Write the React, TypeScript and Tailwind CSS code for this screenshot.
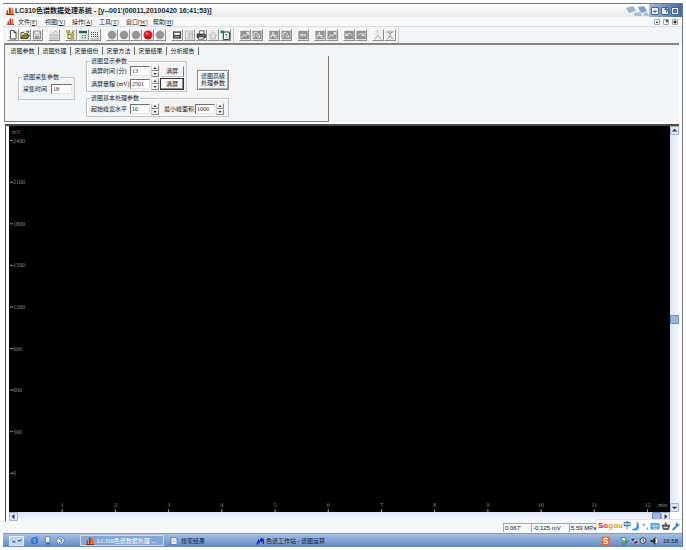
import { useState, type ReactNode } from "react";

const SANS = "font-['Liberation_Sans','Noto_Sans_CJK_SC',sans-serif]";
const SONG = "font-['Liberation_Serif','Noto_Sans_CJK_SC',serif]";

function Flame({ className = "size-2" }: { className?: string }) {
  return (
    <svg viewBox="0 0 8 8" className={className} aria-hidden="true">
      <path d="M0 7.5h8" stroke="#7a2b12" strokeWidth="1" />
      <path d="M0.4 7.2 0.8 3.6 1.8 2.8 2.6 7.2Z" fill="#c8401a" />
      <path d="M2.8 7.2 3 1.2 4 0 4.8 1.6 4.9 7.2Z" fill="#b83214" />
      <path d="M5.1 7.2 5.6 1.4 6.6 0.8 7.6 7.2Z" fill="#d8641c" />
      <path d="M2.2 7 2.7 4.6 3.2 7ZM4.5 7 5 4.4 5.6 7Z" fill="#f6b94c" />
    </svg>
  );
}

const icons: Record<string, ReactNode> = {
  new: <path d="M2.5 0.5h3.5l2 2v6.5h-5.5zM6 0.5v2h2" fill="#fff" stroke="#222" strokeWidth="0.8" />,
  open: (
    <>
      <path d="M1 8.5v-6h2.5l1 1h3v1.5" fill="#f7ef8a" stroke="#3c3a10" strokeWidth="0.8" />
      <path d="M1 8.5 3 5h6.4L7.6 8.5z" fill="#8d8a1a" stroke="#222" strokeWidth="0.8" />
      <path d="M6 1.6q1.5-1.2 2.6 0.4M8.9 0.8v1.5h-1.4" fill="none" stroke="#222" strokeWidth="0.7" />
    </>
  ),
  save: (
    <>
      <path d="M1.5 1.2h7v7.6h-7z" fill="#d8d8d8" stroke="#8b8b8b" />
      <path d="M3 1.4h4v2.8h-4z" fill="#fff" stroke="#9c9c9c" strokeWidth="0.6" />
      <path d="M3 6h4v2.8h-4z" fill="#999" />
    </>
  ),
  load: (
    <>
      <path d="M1 4.4h8v4.6h-8z" fill="#dcdcdc" stroke="#b0b0b0" strokeWidth="0.8" />
      <path d="M3 4.6v4M5 4.6v4M7 4.6v4" stroke="#b8b8b8" strokeWidth="0.7" />
      <path d="M3.6 3 7 1.2l1.4 2" fill="none" stroke="#b4b4b4" />
    </>
  ),
  tree: (
    <>
      <path d="M2 1v7.6h3M2 4.6h3" fill="none" stroke="#55551a" strokeWidth="0.8" />
      <path d="M0.8 0.6h2.8v2.4h-2.8zM4.8 3.2h3v2.4h-3zM4.8 6.8h3v2.4h-3z" fill="#e2d42a" stroke="#6b6a12" strokeWidth="0.6" />
      <path d="M6 1h2.6M6 2.4h1.6" stroke="#2b7d35" strokeWidth="0.8" />
    </>
  ),
  panel: (
    <>
      <path d="M1 0.8h8v2.4h-8z" fill="#1f6544" />
      <path d="M3 4h6v5h-6z" fill="#f6fff8" stroke="#9aa" strokeWidth="0.5" />
      <path d="M4 5.6h1.4M6.4 5.6h1.6M4 7.6h1.4M6.4 7.6h1.6" stroke="#444" strokeWidth="0.9" />
    </>
  ),
  grid: (
    <>
      <path d="M1 2.5h8M1 4.5h8M1 6.5h8" stroke="#444" strokeDasharray="1 1" strokeWidth="1" />
      <path d="M0.6 9h9" stroke="#777" strokeWidth="0.7" />
    </>
  ),
  dot: <circle cx="5" cy="5" r="4.2" fill="#959595" />,
  red: (
    <>
      <circle cx="5" cy="5" r="4.5" fill="#d81b24" />
      <circle cx="4" cy="3.6" r="1.4" fill="#f26a6a" />
      <path d="M3 7.4h4" stroke="#8c0d14" />
    </>
  ),
  card: (
    <>
      <path d="M1 1.4h8v7.2h-8z" fill="#444" />
      <path d="M2.2 2.8h5.6v2h-5.6z" fill="#fff" />
      <path d="M2.4 6.8h5" stroke="#ddd" strokeWidth="0.8" />
    </>
  ),
  page: (
    <>
      <path d="M1.5 1h7v8h-7z" fill="#eee" stroke="#aaa" strokeWidth="0.8" />
      <path d="M3.5 3.2h5M3.5 5h4M3.5 7h4" stroke="#999" strokeWidth="0.8" />
    </>
  ),
  print: (
    <>
      <path d="M3 4 3.8 0.8h4.4L7.6 4" fill="#fff" stroke="#333" strokeWidth="0.8" />
      <path d="M1 4h8.4v3.6h-8.4z" fill="#555" stroke="#222" strokeWidth="0.7" />
      <path d="M2.4 6.8h5.4v2.4h-5.4z" fill="#eee" stroke="#333" strokeWidth="0.7" />
      <path d="M7 5.2h1.2" stroke="#e8d43a" strokeWidth="0.8" />
    </>
  ),
  house: <path d="M1 5.4 5 1.4 9 5.4H7.6V9H2.4V5.4z" fill="#dcdcdc" stroke="#b2b2b2" strokeWidth="0.8" />,
  help: (
    <>
      <path d="M3.4 2h6v7.4h-6z" fill="#fff" stroke="#222" strokeWidth="0.9" />
      <path d="M0.6 0.6h3.6v2.6h-3.6z" fill="#1d7b6e" />
      <path d="M5 4.4h1.6v1.4M6.4 7.4h1" fill="none" stroke="#1d7b6e" />
    </>
  ),
  peakA: (
    <>
      <path d="M0.4 0.8h9.2v8.4h-9.2z" fill="#929292" />
      <path d="M1.4 8 4 4.6 5.4 6.4 8.4 2.4M6 2.4h2.4V5" fill="none" stroke="#f2f2f2" strokeWidth="0.9" />
    </>
  ),
  peakB: (
    <>
      <path d="M0.4 0.8h9.2v8.4h-9.2z" fill="#929292" />
      <path d="M2 8V3l2.4-1 3 3.4V8M4 4.6 6.6 8" fill="none" stroke="#f2f2f2" strokeWidth="0.9" />
    </>
  ),
  peakC: (
    <>
      <path d="M0.4 0.8h9.2v8.4h-9.2z" fill="#929292" />
      <path d="M1.6 8 4.2 2.2 6 7.4 8.4 8M2.8 5.4h5" fill="none" stroke="#f2f2f2" strokeWidth="0.9" />
    </>
  ),
  bar: (
    <>
      <path d="M0.4 0.8h9.2v8.4h-9.2z" fill="#929292" />
      <path d="M2 4.4h6M2 5.8h6" stroke="#f2f2f2" strokeWidth="0.8" />
    </>
  ),
  undo: (
    <>
      <path d="M0.4 0.8h9.2v8.4h-9.2z" fill="#929292" />
      <path d="M2 3v2.6h2.6M2.2 5.4Q5 1.6 8 5.4" fill="none" stroke="#f2f2f2" strokeWidth="0.9" />
    </>
  ),
  redo: (
    <>
      <path d="M0.4 0.8h9.2v8.4h-9.2z" fill="#929292" />
      <path d="M8 3v2.6H5.4M7.8 5.4Q5 1.6 2 5.4" fill="none" stroke="#f2f2f2" strokeWidth="0.9" />
    </>
  ),
  walk: <path d="M4.8 0.6v2M4.8 4.4v1.4L1.6 9.2M4.8 5.8 8.4 9.2" fill="none" stroke="#a9a9a9" />,
  run: (
    <path d="M1 2h2.4l1 1.4 4-1.8M5 3v3L2 9.4M5 6l3.4 3.2M4.4 1.2h2" fill="none" stroke="#8f8f8f" />
  ),
};

const groupsLeft = [
  ["new", "open", "save"],
  ["load"],
  ["tree", "panel", "grid"],
  ["dot", "dot", "dot", "red", "dot"],
  ["card", "page", "print", "house", "help"],
];
const groupsRight = [["peakA", "peakB"], ["peakC", "peakB"], ["bar"], ["peakC", "peakA"], ["undo", "redo"], ["walk", "run"]];

function ToolGroup({ names }: { names: string[] }) {
  return (
    <div className="flex">
      {names.map((name, i) => (
        <button
          key={i}
          aria-label={name}
          className="flex h-3 w-3 items-center justify-center border border-t-white border-l-white border-r-[#8e8e8e] border-b-[#8e8e8e] bg-[#eeefef]"
        >
          <svg viewBox="0 0 10 10" className="size-[10px] shrink-0" aria-hidden="true">
            {icons[name]}
          </svg>
        </button>
      ))}
    </div>
  );
}

function Field({ id, label, initial, width }: { id: string; label: string; initial: string; width: string }) {
  const [value, setValue] = useState(initial);
  return (
    <>
      <label htmlFor={id} className="shrink-0 whitespace-nowrap">
        {label}
      </label>
      <input
        id={id}
        value={value}
        onChange={(e) => setValue(e.target.value)}
        className={`${width} h-[10px] min-w-0 border border-t-[#6f6f6f] border-l-[#6f6f6f] border-r-[#e4e4e4] border-b-[#e4e4e4] bg-white pl-px leading-none`}
      />
    </>
  );
}

function Spinner() {
  return (
    <span className="flex flex-col">
      {["▴", "▾"].map((c) => (
        <button
          key={c}
          aria-label={c === "▴" ? "增加" : "减少"}
          className="flex h-[6px] w-2 items-center justify-center border border-t-white border-l-[#d0d0d0] border-r-[#888] border-b-[#888] bg-[#f0f0f0]"
        >
          <svg viewBox="0 0 4 2" className="h-[2px] w-1" aria-hidden="true">
            <path d={c === "▴" ? "M0.5 2 2 0 3.5 2z" : "M0.5 0h3L2 2z"} fill="#333" />
          </svg>
        </button>
      ))}
    </span>
  );
}

const groupBox = "border border-[#c4c5c7] shadow-[inset_1px_1px_0_#fff]";
const legend = "ml-[3px] px-px leading-[8px]";

function Parameters() {
  return (
    <div className="flex items-start pt-px pl-[13px]">
      <fieldset className={`${groupBox} mt-[16px] w-[57px] pb-[5px]`}>
        <legend className={legend}>谱图采集参数</legend>
        <div className="mt-[3px] flex items-center justify-between pr-[2px] pl-1">
          <Field id="collect" label="采集时间" initial="18" width="w-[21px]" />
        </div>
      </fieldset>
      <div className="ml-[11px] flex w-[143px] flex-col gap-[2px]">
        <div className="flex items-center justify-between">
          <fieldset className={`${groupBox} w-[101px] pb-px`}>
            <legend className={legend}>谱图显示参数</legend>
            <div className="flex flex-col gap-px pl-1">
              <div className="grid grid-cols-[38px_20px_8px_24px] items-center gap-px">
                <Field id="time" label="满屏时间 (分)" initial="13" width="w-[20px]" />
                <Spinner />
                <button className="h-[11px] border border-t-white border-l-white border-r-[#777] border-b-[#bbb] leading-none">满屏</button>
              </div>
              <div className="grid grid-cols-[38px_20px_8px_24px] items-center gap-px">
                <Field id="range" label="满屏量程 (mV)" initial="2501" width="w-[20px]" />
                <Spinner />
                <button className="h-3 border border-[#333] leading-none shadow-[inset_-1px_-1px_0_#888]">满屏</button>
              </div>
            </div>
          </fieldset>
          <button className="mt-[11px] h-5 w-8 border border-[#888] leading-[7px] shadow-[inset_1px_1px_0_#fff,inset_-1px_-1px_0_#aaa]">
            谱图高级
            <br />
            处理参数
          </button>
        </div>
        <fieldset className={`${groupBox} pb-px`}>
          <legend className={legend}>谱图基本处理参数</legend>
          <div className="mt-px flex items-center pr-1 pl-1">
            <div className="grid grid-cols-[38px_20px_8px] items-center gap-px">
              <Field id="width" label="起始峰宽水平" initial="10" width="w-[20px]" />
              <Spinner />
            </div>
            <div className="ml-auto flex items-center gap-px">
              <Field id="area" label="最小峰面积" initial="1000" width="w-[20px]" />
              <Spinner />
            </div>
          </div>
        </fieldset>
      </div>
    </div>
  );
}

const yLabels = ["2400", "2100", "1800", "1500", "1200", "900", "600", "300", "0"];

function Chart() {
  return (
    <svg className={`h-full w-full min-w-0 flex-1 bg-black ${SONG} text-[6px]`} role="img" aria-label="mV / min">
      <text x="3" y="8" fill="#777">
        mV
      </text>
      {yLabels.map((label, i) => {
        const y = `${3.8 + i * 10.77}%`;
        return (
          <g key={label}>
            <line x1="1" x2="4" y1={y} y2={y} stroke="#999" />
            <text x="4" y={y} dy="2" fill="#8a8a8a">
              {label}
            </text>
          </g>
        );
      })}
      {Array.from({ length: 12 }, (_, i) => {
        const x = `${8.05 + i * 8.05}%`;
        return (
          <g key={i}>
            <line x1={x} x2={x} y1="99.3%" y2="100%" stroke="#aaa" />
            <text x={x} y="98.7%" textAnchor="middle" fill="#8a8a8a">
              {i + 1}
            </text>
          </g>
        );
      })}
      <text x="99.6%" y="98.7%" textAnchor="end" fill="#888">
        min
      </text>
    </svg>
  );
}

const arrowPaths = {
  up: "M1 5 4 2 7 5z",
  down: "M1 3h6L4 6z",
  left: "M5 1v6L2 4z",
  right: "M3 1v6l3-3z",
};

function ScrollArrow({ dir }: { dir: keyof typeof arrowPaths }) {
  return (
    <button aria-label={dir} className="size-[9px] shrink-0 rounded-[1px] border border-[#9fb2d0] bg-[#dfe8f6]">
      <svg viewBox="0 0 8 8" className="size-[7px]" aria-hidden="true">
        <path d={arrowPaths[dir]} fill="#1c2c48" />
      </svg>
    </button>
  );
}

const menus = [
  ["文件", "F"],
  ["视图", "V"],
  ["操作", "A"],
  ["工具", "T"],
  ["窗口", "W"],
  ["帮助", "H"],
];
const tabs = ["谱图参数", "谱图处理", "定量组份", "定量方法", "定量结果", "分析报告"];
const windowGlyphs = ["M2 4h4L4 6z", "M4 1h3v3zM3 2h2M6 4v2", "M2 2h4v4h-4zM2 6 6 2"];

function TitleBar() {
  return (
    <header className="flex h-[14px] items-center border-t border-[#777] bg-linear-to-b from-white to-[#e9eaea] pl-[3px]">
      <Flame />
      <h1 className={`ml-px flex-1 text-[7px] leading-[10px] font-bold whitespace-nowrap text-[#222] ${SANS}`}>
        LC310色谱数据处理系统 - [y--001'(00011,20100420 16;41;53)]
      </h1>
      <svg viewBox="0 0 24 13" className="h-[13px] w-6 shrink-0" aria-hidden="true">
        <path d="m1 4 7-2 3 5-7 2z" fill="#98b3d8" />
        <path d="m13 3 6-1 3 5-6 2z" fill="#7f9fcb" />
        <path d="m9 9 6-1 2 4h-7zM18 9l4-1 2 4h-5z" fill="#a9c0e0" />
      </svg>
      <div className="flex h-full items-center gap-[2px] bg-linear-to-r from-[#a4bbdc] to-[#4569a2] pr-[3px] pl-[2px]">
        {windowGlyphs.map((d) => (
          <button key={d} aria-label="窗口" className="size-2 rounded-[1px] border border-[#41659c] bg-[#e9f0fa]">
            <svg viewBox="0 0 8 8" className="size-[6px]" aria-hidden="true">
              <path d={d} fill="#8ba6cd" stroke="#24426f" strokeWidth="1" />
            </svg>
          </button>
        ))}
      </div>
    </header>
  );
}

function MenuBar() {
  return (
    <nav className="flex h-[10px] items-center border-b border-[#dcdedf] bg-[#f7f8f9] pr-1 pl-1">
      <Flame className="size-[7px]" />
      <div className="ml-1 flex flex-1 gap-[7px]">
        {menus.map(([name, key]) => (
          <button key={key} className="w-5 text-left whitespace-nowrap">
            {name}[<u>{key}</u>]
          </button>
        ))}
      </div>
      <div className="flex gap-[3px]">
        {windowGlyphs.map((d) => (
          <button key={d} aria-label="子窗口" className="size-[6px] rounded-[1px] border border-[#9aa3ae] bg-white">
            <svg viewBox="0 0 8 8" className="size-1" aria-hidden="true">
              <path d={d} fill="#333" stroke="#222" strokeWidth="1.4" />
            </svg>
          </button>
        ))}
      </div>
    </nav>
  );
}

function SogouBar() {
  return (
    <div className="absolute right-0 bottom-px flex h-[13px] w-[86px] items-center justify-between border-t border-l border-[#e3e3e3] bg-white px-px">
      <span className={`text-[8px] leading-none font-bold ${SANS}`}>
        <span className="text-[#d8241f]">S</span>
        <span className="text-[#e0402a]">o</span>
        <span className="text-[#f0a41c]">g</span>
        <span className="text-[#8fb62c]">o</span>
        <span className="text-[#d9a21e]">u</span>
      </span>
      <span className="text-[8px] leading-none font-bold text-[#2d7fc8]">中</span>
      <svg viewBox="0 0 50 10" className="h-[10px] w-[50px]" aria-hidden="true">
        <path d="M6 1q1.6 7-5 7.4Q8 11 7.6 4.6 7.4 2 6 1z" fill="#3f8fd6" stroke="#3f8fd6" strokeWidth="0.8" />
        <circle cx="13" cy="4" r="1" fill="none" stroke="#4a86bd" strokeWidth="0.7" />
        <path d="M16.4 6.4v1.6l-1 1" stroke="#4a86bd" fill="none" />
        <rect x="19.5" y="2" width="9" height="6.4" rx="0.6" fill="#4ba0dd" />
        <path d="M21 4h6.4M21 5.6h6.4M22 7.2h4" stroke="#e9f5ff" strokeWidth="0.7" />
        <path d="M35 1v3h3.6l-1 4.4h-5.2L31 4h2" fill="#6b6156" stroke="#3a332c" strokeWidth="0.7" />
        <path d="M32.6 6.4h4.4" stroke="#fff" strokeWidth="0.8" />
        <path d="M41.6 9 46 4.6" stroke="#2f82cc" strokeWidth="1.8" />
        <path d="M44.4 3.4 46 1l1 2 2 .8-2.4 2z" fill="#2f82cc" />
      </svg>
    </div>
  );
}

function TaskBar() {
  return (
    <footer className="flex h-[14px] items-center border-t border-[#8d98a8] bg-linear-to-b from-[#a5c0e4] to-[#6289bf] pl-[6px] text-[#10203c]">
      <button aria-label="开始" className="flex h-[10px] w-[15px] items-center justify-center border border-[#e6eefa] bg-[#bfd2ec]">
        <svg viewBox="0 0 12 8" className="h-2 w-3" aria-hidden="true">
          <path d="M1 4q2-2 4 0L4.6 7Q3 5.4 1 6.6zM6 2q2.4 1.4 5-1L11 4Q8.6 6 6 4.6z" fill="#5079b5" stroke="#fff" strokeWidth="0.6" />
        </svg>
      </button>
      <div className="ml-[6px] flex gap-1">
        <svg viewBox="0 0 9 9" className="size-[9px]" aria-hidden="true">
          <circle cx="4.5" cy="4.8" r="2.8" fill="none" stroke="#1f73cc" strokeWidth="1.5" />
          <path d="M2.6 4.8h4.6M0.8 6.6Q3 0.4 8.6 1" fill="none" stroke="#2a7fd8" />
        </svg>
        <svg viewBox="0 0 9 9" className="size-[9px]" aria-hidden="true">
          <path d="M2.4 0.6h4.4v5.6h-4.4z" fill="#f2f8ff" stroke="#4776b4" strokeWidth="0.7" />
          <path d="M3 7.8h4" stroke="#2d68b4" strokeWidth="1.4" />
        </svg>
        <svg viewBox="0 0 9 9" className="size-[9px]" aria-hidden="true">
          <circle cx="4.5" cy="4.6" r="3.8" fill="#dcecf8" stroke="#3c6ca4" strokeWidth="0.7" />
          <path d="M4.5 4.6 6.6 2.6M2.6 3q2-1.6 3 1.6T3 6.6" fill="none" stroke="#2c6cae" strokeWidth="0.9" />
        </svg>
      </div>
      <button className="ml-[15px] flex h-[11px] w-[84px] items-center gap-[3px] border border-[#c9daf0] bg-[#86a6d3] pl-[5px] whitespace-nowrap text-white">
        <Flame />
        LC310色谱数据处理 ...
      </button>
      <button className="ml-[6px] flex w-[84px] items-center gap-[3px] whitespace-nowrap">
        <svg viewBox="0 0 8 8" className="size-2" aria-hidden="true">
          <path d="M1 0.6h4.6L7 2v5.4H1z" fill="#fff" stroke="#426ca6" strokeWidth="0.8" />
          <path d="M2.4 3h3M2.4 4.6h3" stroke="#6c93c8" strokeWidth="0.7" />
        </svg>
        搜索结果
      </button>
      <button className="ml-[2px] flex items-center gap-[2px] whitespace-nowrap">
        <svg viewBox="0 0 8 8" className="size-2" aria-hidden="true">
          <path d="M0.6 7.4 2.4 3.4 3 6 5.4 1 5.6 5 7.2 1.4 7.4 7" fill="none" stroke="#1426c4" strokeWidth="1.1" />
        </svg>
        色谱工作站 - 谱图运算
      </button>
      <svg viewBox="0 0 60 10" className="mr-[2px] ml-auto h-[10px] w-[60px]" aria-hidden="true">
        <rect x="0.5" y="0.8" width="8.4" height="8.4" rx="1" fill="#f06a24" />
        <path d="M6.8 2.8Q2.6 1.8 2.8 3.8 3 5 5 5T6.4 6.8Q5.6 8 2.4 7.2" fill="none" stroke="#fff" strokeWidth="1.2" />
        <path d="M20 1.6h4l1 3-3 .6z" fill="#f3fff3" stroke="#2c7a37" strokeWidth="0.7" />
        <path d="M20.6 6.4 23 8.6 27 5" fill="none" stroke="#2c9a3a" strokeWidth="1.4" />
        <path d="M30 2h4v3.4h-4zM33 4.4h4v3.4h-4z" fill="#31458c" stroke="#dfe8f8" strokeWidth="0.6" />
        <path d="m32.6 5.6 3 3M35.6 5.6l-3 3" stroke="#d5242d" strokeWidth="0.9" />
        <circle cx="42" cy="4.6" r="2.9" fill="#dbe3ec" stroke="#414d5e" />
        <path d="M42 3v2l1.4.8" fill="none" stroke="#29323f" strokeWidth="0.8" />
        <path d="M49.4 4h2l3-3v8l-3-3h-2z" fill="#333" />
        <path d="M55 3q1.6 2 0 4" fill="none" stroke="#fff" />
      </svg>
      <time className={`pr-1 ${SANS}`}>16:58</time>
    </footer>
  );
}

export default function App() {
  const [tab, setTab] = useState(tabs[0]);
  return (
    <div className={`flex h-screen min-h-[300px] flex-col bg-white p-[3px] text-[6px] leading-[8px] text-[#222] ${SONG}`}>
      <div className="flex min-h-0 flex-1 flex-col border-r border-[#6f7a86]">
        <TitleBar />
        <MenuBar />
        <div className="flex h-4 items-center gap-[5px] bg-[#f3f4f6] pl-1">
          {groupsLeft.map((g, i) => (
            <ToolGroup key={i} names={g} />
          ))}
          <span className="-ml-[3px] h-[15px] w-px bg-[#c9c9c9]" />
          {groupsRight.map((g, i) => (
            <ToolGroup key={i} names={g} />
          ))}
          <span className="-ml-[3px] h-[15px] w-px bg-[#c9c9c9]" />
        </div>
        <section className="mr-[3px] ml-px border-t-2 border-l border-[#858585] bg-[#f3f4f6]">
          <div className="w-[324px] border-b border-[#777]">
            <div role="tablist" className="flex h-[11px] items-center pl-[2px]">
              {tabs.map((t) => (
                <button
                  key={t}
                  role="tab"
                  aria-selected={t === tab}
                  onClick={() => setTab(t)}
                  className="w-8 border-r border-[#666] text-center"
                >
                  {t}
                </button>
              ))}
            </div>
            <div className="border-r border-[#777] pb-1">
              <Parameters />
            </div>
          </div>
        </section>
        <main className="mt-[2px] mr-[3px] ml-[2px] flex min-h-0 flex-1 flex-col border-t-2 border-l border-[#4a4a4a] bg-white pl-[3px]">
          <div className="flex min-h-0 flex-1">
            <Chart />
            <div className="flex w-[9px] flex-col bg-linear-to-r from-[#dce5f3] to-[#f5f8fd]">
              <ScrollArrow dir="up" />
              <div className="flex-1" />
              <div className="h-[9px] rounded-[1px] border border-[#6d8cbf] bg-[#9db6dd]" />
              <div className="flex-1" />
              <ScrollArrow dir="down" />
            </div>
          </div>
          <div className="mr-[9px] flex h-[9px] bg-linear-to-b from-[#dce5f3] to-[#f5f8fd]">
            <ScrollArrow dir="left" />
            <div className="flex-1" />
            <div className="w-[9px] rounded-[1px] border border-[#6d8cbf] bg-[#9db6dd]" />
            <ScrollArrow dir="right" />
          </div>
        </main>
        <div className={`relative flex h-3 items-end justify-end bg-[#f6f7f7] pr-[86px] pb-px ${SANS}`}>
          {["0.067'", "-0.125 mV", "5.59 MPa"].map((s, i) => (
            <span
              key={s}
              className={`h-[9px] border-t border-l border-[#a8a8a8] pl-px leading-[8px] whitespace-nowrap ${i === 0 ? "w-7" : i === 1 ? "w-[38px]" : "w-[27px]"}`}
            >
              {s}
            </span>
          ))}
          <SogouBar />
        </div>
        <TaskBar />
      </div>
    </div>
  );
}
